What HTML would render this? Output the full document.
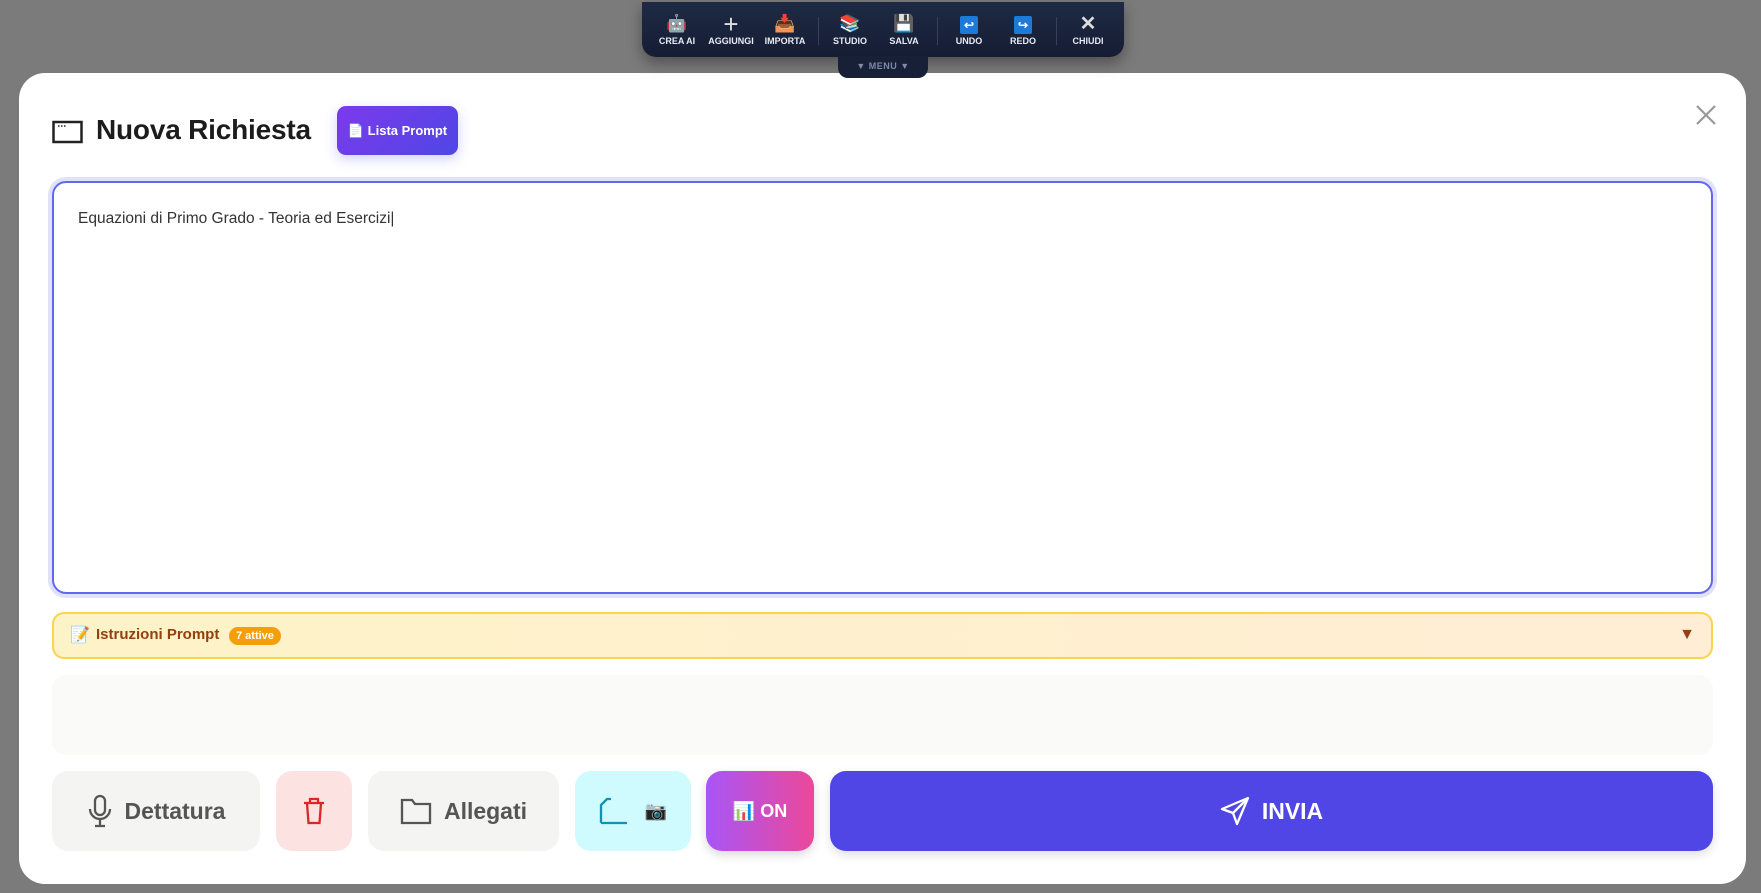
<!DOCTYPE html>
<html><head><meta charset="utf-8"><style>
*{box-sizing:border-box;margin:0;padding:0}
body{width:1761px;height:893px;background:#7b7b7b;font-family:"Liberation Sans","Noto Sans CJK SC",sans-serif;position:relative;overflow:hidden}
.modal{position:absolute;left:19px;top:73px;width:1727px;height:811px;background:#fff;border-radius:26px}
.tb{position:absolute;left:642px;top:2px;width:482px;height:55px;background:linear-gradient(#1e2a44,#151d33);border-radius:0 0 14px 14px;box-shadow:0 6px 14px rgba(0,0,0,.35);z-index:5}
.tab{position:absolute;left:838px;top:56px;width:90px;height:22px;background:#172036;border-radius:0 0 10px 10px;color:#7d8aa8;font-size:9px;font-weight:bold;text-align:center;line-height:20px;z-index:5;letter-spacing:.5px}
.it{position:absolute;top:12px;width:60px;text-align:center;color:#e6ebf5;font-size:9px;font-weight:bold}
.it .ic{height:20px;font-size:17px;line-height:20px;margin-bottom:2px}
.sep{position:absolute;top:15px;width:1px;height:28px;background:#34405c}
.sq{display:inline-block;width:18px;height:18px;background:#1e7ad8;border-radius:2px;vertical-align:middle;color:#fff;font-size:12px;line-height:18px}
h1{position:absolute;left:96px;top:114px;font-size:28px;font-weight:bold;color:#1c1c1c;letter-spacing:-0.2px}
.lp{position:absolute;left:337px;top:106px;width:121px;height:49px;border-radius:9px;background:linear-gradient(135deg,#7c3aed,#4f46e5);color:#fff;font-size:13px;font-weight:bold;line-height:49px;text-align:center;box-shadow:0 4px 12px rgba(99,102,241,.3)}
.ta{position:absolute;left:52px;top:181px;width:1661px;height:413px;border:2px solid #6366f1;border-radius:14px;box-shadow:0 0 0 4px #e0e1fb}
.ta span{position:absolute;left:24px;top:27px;font-size:15.5px;color:#333}
.ins{position:absolute;left:52px;top:612px;width:1661px;height:47px;border:2px solid #fcd34d;border-radius:12px;background:linear-gradient(90deg,#fef3c7,#ffedd5)}
.ins .t{position:absolute;left:42px;top:12px;font-size:15px;font-weight:bold;color:#92400e}
.badge{position:absolute;left:175px;top:13px;background:#f59e0b;color:#fff;font-size:11px;font-weight:bold;border-radius:10px;padding:3px 7px}
.gb{position:absolute;left:52px;top:675px;width:1661px;height:80px;background:#fafaf9;border-radius:14px}
.b{position:absolute;top:771px;height:80px;border-radius:16px;display:flex;align-items:center;justify-content:center;font-size:23px;font-weight:bold;gap:12px}
</style></head><body>
<div class="tb">
<div class="it" style="left:5px"><div class="ic">🤖</div>CREA AI</div>
<div class="it" style="left:59px"><div class="ic" style="font-size:26px;font-weight:normal;color:#ddd">+</div>AGGIUNGI</div>
<div class="it" style="left:113px"><div class="ic">📥</div>IMPORTA</div>
<div class="sep" style="left:176px"></div>
<div class="it" style="left:178px"><div class="ic">📚</div>STUDIO</div>
<div class="it" style="left:232px"><div class="ic">💾</div>SALVA</div>
<div class="sep" style="left:295px"></div>
<div class="it" style="left:297px"><div class="ic"><span class="sq">↩</span></div>UNDO</div>
<div class="it" style="left:351px"><div class="ic"><span class="sq">↪</span></div>REDO</div>
<div class="sep" style="left:414px"></div>
<div class="it" style="left:416px"><div class="ic" style="font-size:20px;color:#ddd">✕</div>CHIUDI</div>
</div>
<div class="tab">▼ MENU ▼</div>
<div class="modal"></div>
<svg style="position:absolute;left:52px;top:118px" width="31" height="26"><rect x="1.5" y="4" width="28" height="20" fill="none" stroke="#222" stroke-width="2.5"/><line x1="6" y1="8" x2="14" y2="8" stroke="#222" stroke-width="1.5" stroke-dasharray="1.5 1.5"/></svg>
<h1>Nuova Richiesta</h1>
<div class="lp">📄 Lista Prompt</div>
<svg style="position:absolute;left:1695px;top:104px" width="22" height="22"><path d="M2 2L20 20M20 2L2 20" stroke="#999" stroke-width="2.2"/></svg>
<div class="ta"><span>Equazioni di Primo Grado - Teoria ed Esercizi|</span></div>
<div class="ins"><span style="position:absolute;left:16px;top:11px;font-size:16px">📝</span><span class="t">Istruzioni Prompt</span><span class="badge">7 attive</span><span style="position:absolute;right:16px;top:12px;color:#92400e;font-size:16px">▼</span></div>
<div class="gb"></div>
<div class="b" style="left:52px;width:208px;background:#f4f4f3;color:#555"><svg width="26" height="34" viewBox="0 0 26 34" fill="none" stroke="#555" stroke-width="2.3"><rect x="8" y="2" width="10" height="19" rx="5"/><path d="M3 15a10 10 0 0 0 20 0M13 25v7M8 32h10"/></svg>Dettatura</div>
<div class="b" style="left:276px;width:76px;background:#fde2e2"><svg width="24" height="28" viewBox="0 0 24 28" fill="none" stroke="#dc2626" stroke-width="2.3"><path d="M2 6h20M8 6V2h8v4M5 6l1.5 20h11L19 6"/></svg></div>
<div class="b" style="left:368px;width:191px;background:#f4f4f3;color:#555"><svg width="32" height="28" viewBox="0 0 32 28" fill="none" stroke="#555" stroke-width="2.3"><path d="M2 3h10l3 4h15v19H2z"/></svg>Allegati</div>
<div class="b" style="left:575px;width:116px;background:#cffafe;gap:16px"><svg width="30" height="28" viewBox="0 0 30 28" fill="none" stroke="#0e93b0" stroke-width="2.3"><path d="M2 26V8l6-6h4M2 26h26"/></svg><span style="font-size:18px">📷</span></div>
<div class="b" style="left:706px;width:108px;background:linear-gradient(90deg,#a855f7,#ec4899);color:#fff;font-size:18px;gap:6px;box-shadow:0 4px 10px rgba(0,0,0,.15)">📊 ON</div>
<div class="b" style="left:830px;width:883px;background:#4f46e5;color:#fff;box-shadow:0 4px 10px rgba(0,0,0,.12)"><svg width="30" height="30" viewBox="0 0 30 30" fill="none" stroke="#fff" stroke-width="2.3" stroke-linejoin="round"><path d="M28 2L2 13l11 4 4 11z M28 2L13 17"/></svg>INVIA</div>
</body></html>
